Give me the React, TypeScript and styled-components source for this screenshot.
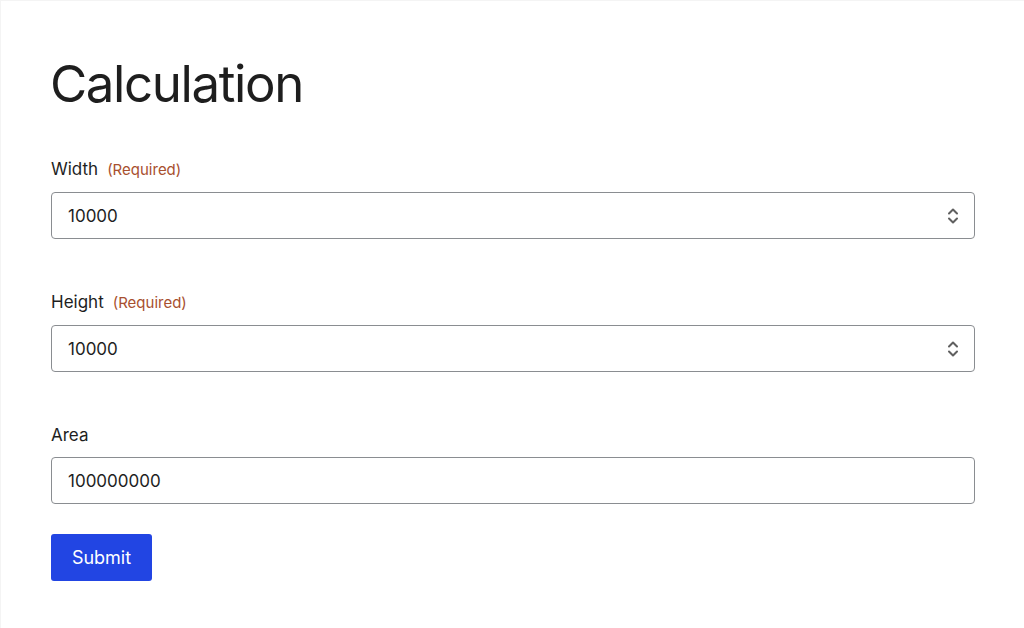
import React from "react";
import styled, { createGlobalStyle } from "styled-components";

const GlobalStyle = createGlobalStyle`
  html, body {
    margin: 0;
    padding: 0;
    background: #ffffff;
  }
  body {
    font-family: Inter, "Noto Sans", "Liberation Sans", sans-serif;
    color: #1e1e1e;
  }
`;

const Page = styled.main`
  box-sizing: border-box;
  width: 1024px;
  min-height: 628px;
  padding: 47px 49px 40px 50px;
  border-left: 1px solid #f4f4f4;
  border-top: 1px solid #f4f4f4;
`;

const Title = styled.h1`
  margin: 0 0 37px -1px;
  font-size: 51px;
  font-weight: 400;
  line-height: 72px;
  letter-spacing: -1.4px;
  color: #1e1e1e;
`;

const Form = styled.form`
  display: flex;
  flex-direction: column;
`;

const Field = styled.div<{ $last?: boolean }>`
  display: flex;
  flex-direction: column;
  gap: 10px;
  margin-bottom: ${(p) => (p.$last ? "30px" : "51px")};
`;

const Label = styled.label`
  display: flex;
  align-items: baseline;
  gap: 9px;
  font-size: 17px;
  line-height: 24px;
  color: #1e1e1e;
`;

const Required = styled.span`
  font-size: 15px;
  color: #a8502f;
`;

const InputBox = styled.div`
  box-sizing: border-box;
  height: 47px;
  display: flex;
  align-items: center;
  border: 1px solid #8a8d91;
  border-radius: 4px;
  background: #fff;
`;

const Input = styled.input`
  flex: 1;
  border: none;
  outline: none;
  background: transparent;
  padding: 0 16px;
  font-family: inherit;
  font-size: 17px;
  color: #1e1e1e;
`;

const Spinner = styled.span`
  display: flex;
  align-items: center;
  padding-right: 15px;
  color: #606060;
`;

const SubmitButton = styled.button`
  align-self: flex-start;
  width: 101px;
  height: 47px;
  border: none;
  border-radius: 3px;
  background: #2245e3;
  color: #fff;
  font-family: inherit;
  font-size: 18px;
  cursor: pointer;
`;

const SpinIcon = () => (
  <svg width="12" height="18" viewBox="0 0 12 18" fill="none">
    <path d="M2 6.5 L6 2.5 L10 6.5" stroke="currentColor" strokeWidth="2" strokeLinecap="round" strokeLinejoin="round" />
    <path d="M2 11.5 L6 15.5 L10 11.5" stroke="currentColor" strokeWidth="2" strokeLinecap="round" strokeLinejoin="round" />
  </svg>
);

type FieldDef = { label: string; value: string; required?: boolean; number?: boolean };

const fields: FieldDef[] = [
  { label: "Width", value: "10000", required: true, number: true },
  { label: "Height", value: "10000", required: true, number: true },
  { label: "Area", value: "100000000" },
];

export default function App() {
  return (
    <>
      <GlobalStyle />
      <Page>
        <Title>Calculation</Title>
        <Form onSubmit={(e) => e.preventDefault()}>
          {fields.map((f, i) => (
            <Field key={f.label} $last={i === fields.length - 1}>
              <Label>
                {f.label}
                {f.required && <Required>(Required)</Required>}
              </Label>
              <InputBox>
                <Input type="text" defaultValue={f.value} />
                {f.number && (
                  <Spinner>
                    <SpinIcon />
                  </Spinner>
                )}
              </InputBox>
            </Field>
          ))}
          <SubmitButton type="submit">Submit</SubmitButton>
        </Form>
      </Page>
    </>
  );
}
